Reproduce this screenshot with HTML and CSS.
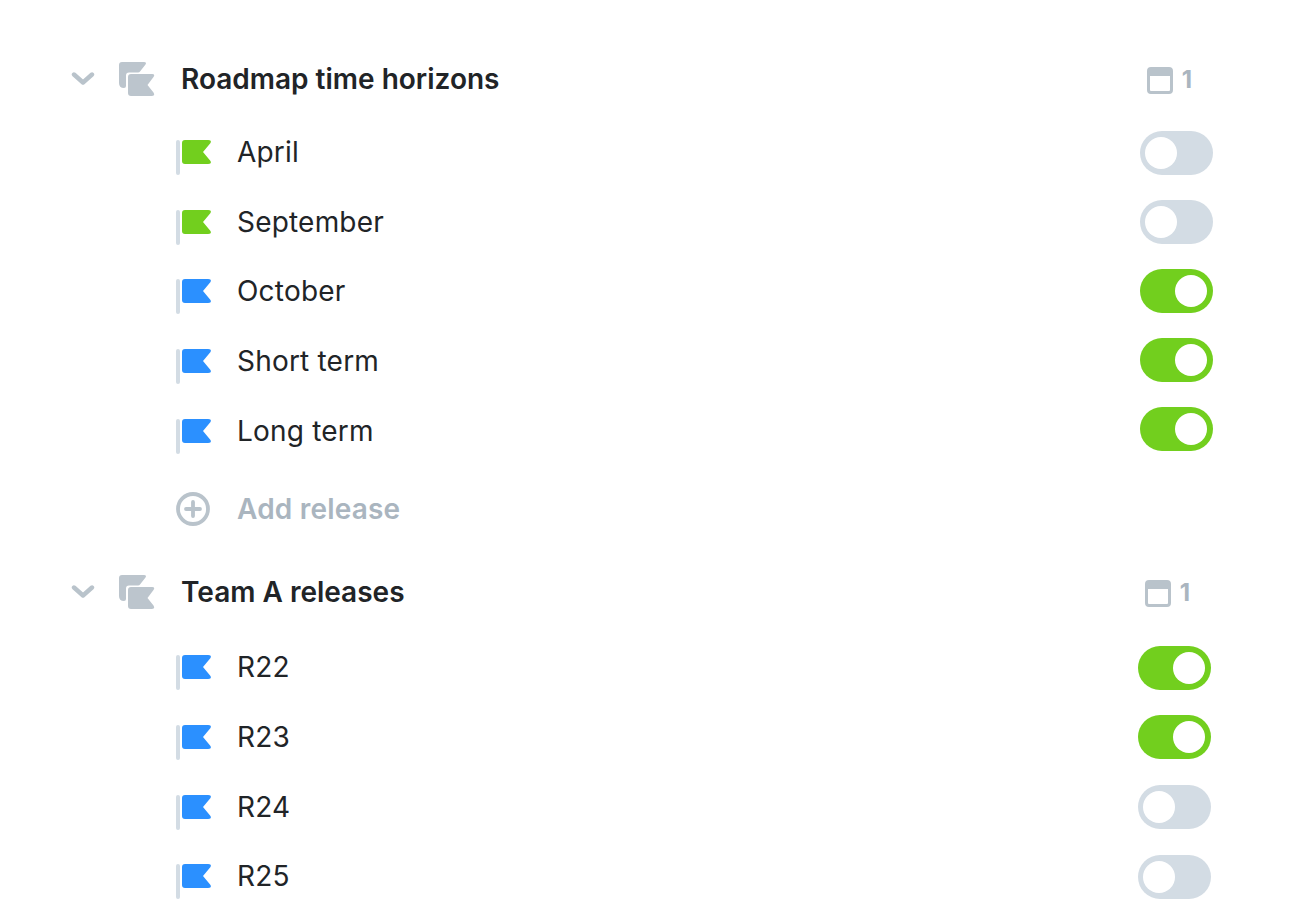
FILE: index.html
```html
<!DOCTYPE html>
<html lang="en">
<head>
    <meta charset="UTF-8">
    <title>Release visibility</title>
    <link rel="stylesheet" href="styles.css">
</head>
<body>
    <svg class="defs" width="0" height="0">
        <symbol id="chevron" viewBox="0 0 24 14">
            <path d="M3 2.5 L12 10.5 L21 2.5" fill="none" stroke="currentColor" stroke-width="4.4" stroke-linecap="round" stroke-linejoin="round"/>
        </symbol>
        <symbol id="group" viewBox="0 0 36 36">
            <path d="M3 0 H25 Q28 0 26.500 2.500 L21 9.500 Q20.500 10.500 19 10.500 H10 Q7 10.500 7 13.500 V24 Q7 26 5 26 Q0 26 0 21 V3 Q0 0 3 0 Z"/>
            <path d="M12 12 H33 Q36.500 12 34.500 15 L28.500 23 L34.500 30.500 Q36.500 34 33 34 H12 Q9 34 9 31 V15 Q9 12 12 12 Z"/>
        </symbol>
        <symbol id="flag" viewBox="0 0 36 36">
            <rect x="0" y="0" width="4" height="35" rx="2" fill="#d3dce4"/>
            <path fill="currentColor" d="M9 0 H32 Q36 0 34.500 3 L27 12 L34.500 21 Q36 24 32 24 H9 Q6 24 6 21 V3 Q6 0 9 0 Z"/>
        </symbol>
        <symbol id="calendar" viewBox="0 0 26 27">
            <rect x="1.500" y="1.500" width="23" height="24" rx="2.500" fill="none" stroke="currentColor" stroke-width="3"/>
            <rect x="1.500" y="1.500" width="23" height="7.500" fill="currentColor"/>
        </symbol>
        <symbol id="plus" viewBox="0 0 34 34">
            <circle cx="17" cy="17" r="15" fill="none" stroke="currentColor" stroke-width="3.800"/>
            <path d="M17 10 V24 M10 17 H24" fill="none" stroke="currentColor" stroke-width="3.800" stroke-linecap="round"/>
        </symbol>
    </svg>

    <div class="list">
        <section class="group">
            <div class="group-head">
                <svg class="chevron"><use href="#chevron"/></svg>
                <svg class="group-icon"><use href="#group"/></svg>
                <span class="group-name">Roadmap time horizons</span>
                <span class="count"><svg class="calendar"><use href="#calendar"/></svg>1</span>
            </div>
            <div class="row">
                <svg class="flag green"><use href="#flag"/></svg>
                <span class="name">April</span>
                <span class="toggle nudge-down"></span>
            </div>
            <div class="row">
                <svg class="flag green"><use href="#flag"/></svg>
                <span class="name">September</span>
                <span class="toggle"></span>
            </div>
            <div class="row">
                <svg class="flag"><use href="#flag"/></svg>
                <span class="name">October</span>
                <span class="toggle on"></span>
            </div>
            <div class="row">
                <svg class="flag"><use href="#flag"/></svg>
                <span class="name">Short term</span>
                <span class="toggle on nudge-1"></span>
            </div>
            <div class="row">
                <svg class="flag"><use href="#flag"/></svg>
                <span class="name">Long term</span>
                <span class="toggle on nudge-2"></span>
            </div>
            <div class="add-row">
                <svg class="plus"><use href="#plus"/></svg>
                <span class="add-label">Add release</span>
            </div>
        </section>

        <section class="group second">
            <div class="group-head">
                <svg class="chevron"><use href="#chevron"/></svg>
                <svg class="group-icon"><use href="#group"/></svg>
                <span class="group-name">Team A releases</span>
                <span class="count"><svg class="calendar"><use href="#calendar"/></svg>1</span>
            </div>
            <div class="row">
                <svg class="flag"><use href="#flag"/></svg>
                <span class="name">R22</span>
                <span class="toggle on"></span>
            </div>
            <div class="row">
                <svg class="flag"><use href="#flag"/></svg>
                <span class="name">R23</span>
                <span class="toggle on"></span>
            </div>
            <div class="row">
                <svg class="flag"><use href="#flag"/></svg>
                <span class="name">R24</span>
                <span class="toggle"></span>
            </div>
            <div class="row">
                <svg class="flag"><use href="#flag"/></svg>
                <span class="name">R25</span>
                <span class="toggle"></span>
            </div>
        </section>
    </div>
</body>
</html>
```

FILE: styles.css
```css
html, body {
    height: 100%;
}
body {
    margin: 0;
    background: #fff;
    color: #212427;
    font-family: Inter, "Liberation Sans", sans-serif;
    overflow: hidden;
}
.defs {
    display: block;
    height: 0;
}
.list {
    padding: 44px 87px 0 71px;
}
.group.second {
    margin-top: 4px;
    padding-right: 2px;
}
.group-head {
    display: flex;
    align-items: center;
    height: 70px;
    margin-bottom: 3px;
}
.second .group-head {
    margin-bottom: 5px;
}
.chevron {
    width: 24px;
    height: 14px;
    color: #b9c3cb;
    flex: none;
}
.group-icon {
    width: 36px;
    height: 36px;
    margin-left: 24px;
    margin-top: 2px;
    fill: #bcc5cd;
    flex: none;
}
.group-name {
    margin-left: 26px;
    font-size: 28px;
    font-weight: 600;
}
.count {
    display: flex;
    align-items: center;
    margin-left: auto;
    margin-right: 21px;
    color: #aab5bf;
    font-size: 24px;
    font-weight: 700;
}
.calendar {
    width: 26px;
    height: 27px;
    margin-top: 2px;
    margin-right: 9px;
    color: #b9c3cb;
}
.row {
    display: flex;
    align-items: center;
    height: 69.7px;
    padding-left: 105px;
}
.flag {
    width: 36px;
    height: 36px;
    margin-top: 12px;
    color: #2b90ff;
    flex: none;
}
.flag.green {
    color: #72cf1e;
}
.name {
    margin-left: 25px;
    font-size: 28px;
    letter-spacing: 0.2px;
}
.toggle {
    margin-left: auto;
    width: 73px;
    height: 44px;
    box-sizing: border-box;
    padding: 6px 6px 6px 5px;
    border-radius: 22px;
    background: #d3dce4;
    display: flex;
}
.toggle::after {
    content: "";
    width: 32px;
    height: 32px;
    border-radius: 50%;
    background: #fff;
}
.toggle.on {
    background: #72cf1e;
    justify-content: flex-end;
}
.toggle.nudge-down {
    margin-top: 2px;
}
.second .toggle {
    margin-top: 1px;
}
.toggle.nudge-1 {
    margin-bottom: 2px;
}
.toggle.nudge-2 {
    margin-bottom: 4px;
}
.add-row {
    display: flex;
    align-items: center;
    height: 88px;
    padding-left: 105px;
}
.plus {
    width: 34px;
    height: 34px;
    color: #b9c3cb;
    flex: none;
}
.add-label {
    margin-left: 27px;
    color: #aab5bf;
    font-size: 28px;
    font-weight: 600;
    letter-spacing: 0.2px;
}
```
